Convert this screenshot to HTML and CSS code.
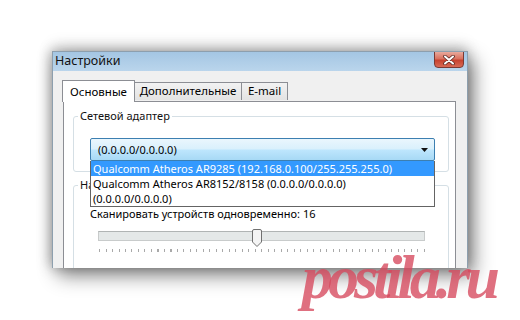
FILE: index.html
```html
<!DOCTYPE html>
<html lang="ru">
<head>
<meta charset="utf-8">
<link rel="stylesheet" href="styles.css">
</head>
<body>
<div class="stage">
  <div class="window">
    <div class="titlebar">
      <span class="title">Настройки</span>
      <div class="close">
        <svg width="14" height="10" viewBox="0 0 14 10"><path d="M3 1.5 L11 8.5 M11 1.5 L3 8.5" stroke="#5b2a25" stroke-width="3.6" stroke-linecap="round"/><path d="M3 1.5 L11 8.5 M11 1.5 L3 8.5" stroke="#fff" stroke-width="2" stroke-linecap="round"/></svg>
      </div>
    </div>
    <div class="client">
      <div class="tabs">
        <div class="tab active">Основные</div>
        <div class="tab t2">Дополнительные</div>
        <div class="tab t3">E-mail</div>
      </div>
      <div class="panel">
        <fieldset class="group g1">
          <legend>Сетевой адаптер</legend>
          <div class="combo-wrap">
            <div class="combo">
              <span>(0.0.0.0/0.0.0.0)</span>
              <svg class="arrow" width="7" height="4" viewBox="0 0 7 4"><path d="M0 0 H7 L3.5 4 Z" fill="#111"/></svg>
            </div>
            <ul class="dropdown">
              <li class="sel">Qualcomm Atheros AR9285 (192.168.0.100/255.255.255.0)</li>
              <li>Qualcomm Atheros AR8152/8158 (0.0.0.0/0.0.0.0)</li>
              <li>(0.0.0.0/0.0.0.0)</li>
            </ul>
          </div>
        </fieldset>
        <fieldset class="group g2">
          <legend>Настройки</legend>
          <div class="label">Сканировать устройств одновременно: 16</div>
          <div class="slider">
            <div class="track"></div>
            <svg class="thumb" style="left: 154px" width="10" height="18" viewBox="0 0 10 18"><path d="M0.5 2 Q0.5 0.5 2 0.5 H8 Q9.5 0.5 9.5 2 V13 L5 17.5 L0.5 13 Z" fill="#f4f4f4" stroke="#707070"/></svg>
          </div>
          <div class="ticks"></div>
        </fieldset>
      </div>
    </div>
  </div>
  <div class="watermark">postila.ru</div>
</div>
</body>
</html>
```

FILE: styles.css
```css
html, body {
  margin: 0;
  padding: 0;
  background: #fff;
}
body {
  width: 520px;
  height: 320px;
  overflow: hidden;
  font-family: "Noto Sans", "Open Sans", sans-serif;
  font-size: 11px;
  color: #000;
}
.stage {
  position: relative;
  width: 520px;
  height: 320px;
  padding: 51px 0 0 52px;
  box-sizing: border-box;
}
.window {
  width: 416px;
  height: 217px;
  box-sizing: border-box;
  border: 1px solid #8d9fae;
  border-bottom: none;
  background: #f0f0f0;
  overflow: hidden;
  box-shadow: 6px 8px 18px rgba(0,0,0,0.45), -2px 0 12px rgba(0,0,0,0.25), 0 -6px 14px rgba(0,0,0,0.12);
}
.titlebar {
  height: 19px;
  display: flex;
  align-items: flex-start;
  justify-content: space-between;
  background: linear-gradient(#a4c6e3, #bad5ec);
}
.title {
  font-size: 12.5px;
  line-height: 18px;
  padding-left: 2px;
  color: #111;
}
.close {
  width: 30px;
  height: 17px;
  box-sizing: border-box;
  margin: -1px 3px 0 0;
  border: 1px solid #7a3a34;
  border-radius: 0 0 4px 4px;
  background: linear-gradient(#e9a99c 0%, #d9715f 45%, #c7422f 55%, #d86a55 100%);
  display: flex;
  align-items: center;
  justify-content: center;
}
.close svg { display: block; }
.client {
  padding: 9px 13px 0 9px;
}
.tabs {
  display: flex;
  align-items: flex-end;
  height: 21px;
  font-size: 11.5px;
}
.tab {
  box-sizing: border-box;
  height: 18px;
  border: 1px solid #8c8e94;
  border-bottom: none;
  background: linear-gradient(#f2f2f2, #e3e3e3);
  line-height: 16px;
  text-align: center;
  margin-bottom: 1px;
  margin-left: -1px;
}
.tab.active {
  width: 73px;
  height: 22px;
  margin-left: 0;
  margin-bottom: -1px;
  background: #fff;
  position: relative;
  z-index: 1;
  line-height: 20px;
  padding-top: 1px;
}
.tab.t2 { width: 108px; }
.tab.t3 { width: 47px; }
.panel {
  margin-left: 1px;
  width: 393px;
  height: 200px;
  box-sizing: border-box;
  border: 1px solid #8c8e94;
  background: #fff;
  padding: 6px 6px 0 9px;
}
.group {
  margin: 0;
  border: 1px solid #d5dfe5;
  border-radius: 3px;
  padding: 14px 13px 10px 16px;
  min-width: 0;
}
.group legend {
  margin-left: -12px;
  padding: 0 2px;
  line-height: 16px;
  color: #111;
}
.combo-wrap {
  position: relative;
}
.combo {
  height: 23px;
  box-sizing: border-box;
  border: 1px solid #3c7fb1;
  border-radius: 2px;
  background: linear-gradient(#eaf6fd 0%, #d9f0fc 48%, #bee6fd 52%, #a7d9f5 100%);
  display: flex;
  align-items: center;
  justify-content: space-between;
  padding: 0 6px 0 7px;
}
.arrow { display: block; }
.dropdown {
  position: absolute;
  left: 0;
  right: 0;
  top: 23px;
  margin: 0;
  padding: 0;
  list-style: none;
  background: #fff;
  border: 1px solid #646464;
  border-top: none;
  z-index: 5;
}
.dropdown li {
  height: 15px;
  line-height: 15px;
  padding-left: 2px;
  white-space: nowrap;
}
.dropdown li.sel {
  background: #3399ff;
  color: #fff;
}
.g2 {
  margin-top: 5px;
  padding: 13px 13px 30px 16px;
  height: 120px;
}
.label {
  line-height: 15px;
}
.slider {
  position: relative;
  height: 18px;
  margin: 8px 10px 0 8px;
}
.track {
  position: absolute;
  left: 0;
  right: 0;
  top: 2px;
  height: 10px;
  box-sizing: border-box;
  border: 1px solid #c8cbcb;
  border-top-color: #b0b4b4;
  background: #e4e8e8;
}
.thumb {
  position: absolute;
  top: 0;
  display: block;
}
.ticks {
  margin: 2px 10px 0 9px;
  height: 3px;
  background: repeating-linear-gradient(90deg, #a9a9a9 0 1px, transparent 1px 6.5px);
}
.watermark {
  position: absolute;
  left: 302px;
  top: 237px;
  font-family: "Liberation Serif", serif;
  font-weight: bold;
  font-style: italic;
  font-size: 62px;
  line-height: 80px;
  letter-spacing: -5px;
  color: rgba(214, 72, 92, 0.78);
  white-space: nowrap;
}
```
